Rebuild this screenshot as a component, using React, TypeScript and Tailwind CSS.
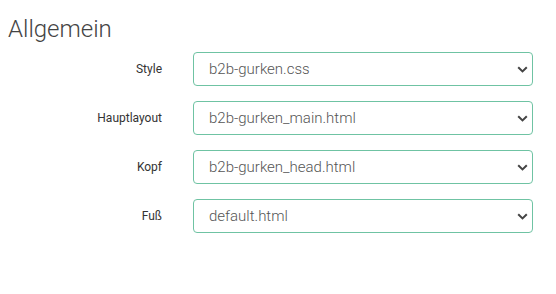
import React from "react";

const rows = [
  { label: "Style", value: "b2b-gurken.css" },
  { label: "Hauptlayout", value: "b2b-gurken_main.html" },
  { label: "Kopf", value: "b2b-gurken_head.html" },
  { label: "Fuß", value: "default.html" },
];

function Chevron() {
  return (
    <svg width="11" height="7" viewBox="0 0 11 7" className="text-[#444]">
      <path d="M1.2 1.2 L5.5 5.4 L9.8 1.2" fill="none" stroke="currentColor" strokeWidth="2" />
    </svg>
  );
}

export default function App() {
  return (
    <div className="h-[294px] w-[556px] bg-white pl-2 pt-[12px] font-['Roboto',sans-serif]">
      <h1 className="text-[24px] font-light leading-[34px] text-[#444]">Allgemein</h1>
      <div className="mt-[6px] flex flex-col gap-[15px]">
        {rows.map((r) => (
          <div key={r.label} className="flex items-center">
            <div className="w-[154px] text-right text-[12px] font-normal text-[#333]">{r.label}</div>
            <div className="ml-[31px] flex h-[34px] w-[340px] items-center justify-between rounded-[4px] border border-[#6fc3a3] pl-[15px] pr-[4px]">
              <span className="text-[15px] font-light text-[#555]">{r.value}</span>
              <Chevron />
            </div>
          </div>
        ))}
      </div>
    </div>
  );
}
